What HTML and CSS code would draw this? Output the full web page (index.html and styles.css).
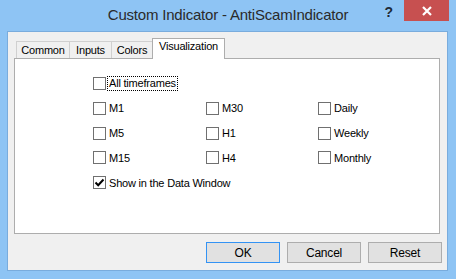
FILE: index.html
```html
<!DOCTYPE html>
<html lang="en">
<head>
  <meta charset="UTF-8" />
  <title>Custom Indicator - AntiScamIndicator</title>
  <link rel="stylesheet" href="styles.css">
</head>
<body>
  <div class="window">
    <div class="titlebar">
      <span></span>
      <span class="title">Custom Indicator - AntiScamIndicator</span>
      <div class="controls">
        <span class="help">?</span>
        <span class="close">
          <svg width="12" height="10" viewBox="0 0 12 10"><path d="M2 1 L10 9 M10 1 L2 9" stroke="#fff" stroke-width="2.2" fill="none"/></svg>
        </span>
      </div>
    </div>

    <div class="client">
      <div class="tabs">
        <span class="tab tab-common">Common</span>
        <span class="tab tab-inputs">Inputs</span>
        <span class="tab tab-colors">Colors</span>
        <span class="tab tab-vis selected">Visualization</span>
      </div>

      <div class="panel">
        <label class="check">
          <span class="box"></span>
          <span class="focus">All timeframes</span>
        </label>

        <div class="periods">
          <label class="check"><span class="box"></span>M1</label>
          <label class="check"><span class="box"></span>M30</label>
          <label class="check"><span class="box"></span>Daily</label>
          <label class="check"><span class="box"></span>M5</label>
          <label class="check"><span class="box"></span>H1</label>
          <label class="check"><span class="box"></span>Weekly</label>
          <label class="check"><span class="box"></span>M15</label>
          <label class="check"><span class="box"></span>H4</label>
          <label class="check"><span class="box"></span>Monthly</label>
        </div>

        <label class="check">
          <span class="box">
            <svg width="11" height="11" viewBox="0 0 11 11"><path d="M1.5 5.5 L4.2 8.2 L9.5 2.5" stroke="#000" stroke-width="2" fill="none"/></svg>
          </span>
          Show in the Data Window
        </label>
      </div>

      <div class="buttons">
        <button class="btn default">OK</button>
        <button class="btn">Cancel</button>
        <button class="btn">Reset</button>
      </div>
    </div>
  </div>
</body>
</html>
```

FILE: styles.css
```css
:root {
  --frame: #8ec4f4;
  --client: #f0f0f0;
  --edge: #adadad;
  --text: #000;
}
body {
  margin: 0;
  font-family: 'Liberation Sans', Arial, sans-serif;
  font-size: 11px;
  color: var(--text);
}
.window {
  width: 456px;
  height: 279px;
  background: var(--frame);
  display: flex;
  flex-direction: column;
}
.titlebar {
  height: 31px;
  display: grid;
  grid-template-columns: 1fr auto 1fr;
}
.title {
  font-size: 15px;
  letter-spacing: -0.2px;
  color: #2a2a2a;
  line-height: 30px;
}
.controls {
  justify-self: end;
  display: flex;
  align-items: flex-start;
  margin-right: 7px;
}
.help {
  font-weight: bold;
  font-size: 14px;
  color: #1e2a36;
  line-height: 24px;
  margin-right: 11px;
}
.close {
  width: 45px;
  height: 21px;
  background: #c75050;
  display: flex;
  align-items: center;
  justify-content: center;
}
.client {
  flex: 1;
  margin: 0 8px 8px 7px;
  border: 1px solid #79acdd;
  background: var(--client);
  display: flex;
  flex-direction: column;
  padding-top: 6px;
}
.tabs {
  display: flex;
  align-items: flex-end;
  margin-left: 8px;
  height: 20px;
  position: relative;
  z-index: 1;
}
.tab {
  box-sizing: border-box;
  height: 17px;
  border: 1px solid #d0d0d0;
  border-bottom: none;
  margin-right: -1px;
  text-align: center;
  line-height: 17px;
  letter-spacing: -0.2px;
  background: var(--client);
}
.tab-common { width: 54px; }
.tab-inputs { width: 43px; }
.tab-colors { width: 42px; }
.tab-vis {
  width: 73px;
  height: 21px;
  margin-bottom: -1px;
  line-height: 15px;
  background: #fff;
  border-color: var(--edge);
}
.panel {
  flex: 1;
  margin: 0 7px 0 6px;
  background: #fff;
  border: 1px solid var(--edge);
  padding: 18px 0 0 78px;
  display: flex;
  flex-direction: column;
  gap: 11.75px;
}
.periods {
  display: grid;
  grid-template-columns: 113px 112px auto;
  row-gap: 11.75px;
}
.check {
  display: flex;
  align-items: center;
  height: 13px;
  gap: 3px;
  letter-spacing: -0.2px;
  white-space: nowrap;
}
.box {
  box-sizing: border-box;
  width: 13px;
  height: 13px;
  border: 1px solid #707070;
  background: #fff;
  display: flex;
  align-items: center;
  justify-content: center;
  flex: none;
}
.focus {
  outline: 1px dotted #000;
  padding: 0 1px;
  margin-left: -1px;
  line-height: 13px;
}
.buttons {
  display: flex;
  justify-content: flex-end;
  gap: 7px;
  margin: 8px 5px 7px 0;
}
.btn {
  box-sizing: border-box;
  width: 74px;
  height: 21px;
  border: 1px solid var(--edge);
  background: #e1e1e1;
  font-family: inherit;
  font-size: 12px;
  letter-spacing: -0.2px;
  padding: 0;
  color: #000;
}
.btn.default {
  border-color: #3393f4;
}
```
